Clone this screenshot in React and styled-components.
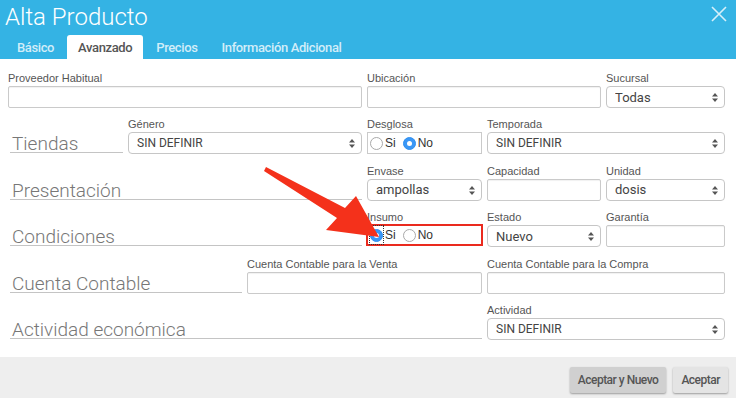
import React from "react";
import styled, { createGlobalStyle } from "styled-components";

const GlobalStyle = createGlobalStyle`
  html, body { margin: 0; padding: 0; background: #fff; }
  body { width: 736px; height: 398px; overflow: hidden; }
  * { box-sizing: border-box; }
`;

const Modal = styled.div`
  position: relative;
  width: 736px;
  height: 398px;
  display: flex;
  flex-direction: column;
  font-family: "Liberation Sans", Arial, sans-serif;
  background: #fff;
`;

const Header = styled.div`
  height: 59px;
  background: #34b3e4;
  display: flex;
  flex-direction: column;
  justify-content: space-between;
`;

const TitleRow = styled.div`
  display: flex;
  justify-content: space-between;
  align-items: flex-start;
  padding: 2px 9px 0 5px;
`;

const Title = styled.h1`
  margin: 0;
  font-family: Roboto, sans-serif;
  font-weight: 300;
  font-size: 24px;
  line-height: 30px;
  color: #fff;
`;

const Close = styled.button`
  margin-top: 4px;
  padding: 0;
  border: 0;
  background: none;
  width: 16px;
  height: 16px;
  display: flex;
`;

const Tabs = styled.div`
  display: flex;
  gap: 2px;
  padding-left: 6px;
  height: 24px;
`;

const Tab = styled.div`
  height: 24px;
  padding: 1px 11px 0;
  line-height: 23px;
  font-family: Roboto, sans-serif;
  font-weight: 500;
  font-size: 13px;
  letter-spacing: -0.38px;
  border-radius: 3px 3px 0 0;
  color: ${(p) => (p.$active ? "#555" : "rgba(255,255,255,0.78)")};
  background: ${(p) => (p.$active ? "#fff" : "transparent")};
`;

const Body = styled.div`
  flex: 1;
  padding: 11px 11px 0 8px;
`;

const FormGrid = styled.div`
  display: grid;
  grid-template-columns: 115fr 114fr 115fr 115fr 114fr 119fr;
  grid-auto-rows: 38px;
  column-gap: 5px;
  row-gap: 8.4px;
`;

const FieldCell = styled.div`
  grid-column: span ${(p) => p.$span || 1};
  display: flex;
  flex-direction: column;
  min-width: 0;
`;

const Label = styled.label`
  height: 16px;
  line-height: 16px;
  font-size: 11px;
  color: #555;
  white-space: nowrap;
`;

const Section = styled.div`
  grid-column: span ${(p) => p.$span || 1};
  align-self: end;
  margin: 0 0 1px 2px;
  padding-left: 2px;
  border-bottom: 1px solid #c4c4c4;
  font-family: Roboto, sans-serif;
  font-weight: 300;
  font-size: 19px;
  line-height: 16px;
  color: #777;
  white-space: nowrap;
`;

const TextInput = styled.input`
  height: 22px;
  width: 100%;
  border: 1px solid #cacaca;
  border-radius: 2px;
  box-shadow: inset 0 1px 1px rgba(0, 0, 0, 0.06);
  background: #fff;
  outline: none;
`;

const SelectWrap = styled.div`
  position: relative;
  height: 22px;
`;

const SelectBox = styled.select`
  appearance: none;
  width: 100%;
  height: 22px;
  border: 1px solid #c6c6c6;
  border-radius: 4px;
  background: #fff;
  padding: 0 20px 0 8px;
  font-family: Roboto, sans-serif;
  font-size: ${(p) => (p.$caps ? "12px" : "13px")};
  color: #444;
  outline: none;
`;

const SelectArrows = styled.svg`
  position: absolute;
  right: 7px;
  top: 7px;
  pointer-events: none;
`;

const RadioBox = styled.div`
  height: 22px;
  display: flex;
  align-items: center;
  padding-left: 1px;
  border: ${(p) => (p.$highlight ? "2px solid #ea2a1e" : "1px solid #cacaca")};
  margin: ${(p) => (p.$highlight ? "-1px" : "0")};
`;

const RadioHit = styled.span`
  display: flex;
  align-items: center;
  height: ${(p) => (p.$focus ? "20px" : "auto")};
  padding: 0 1px;
  outline: ${(p) => (p.$focus ? "1px dotted #333" : "none")};
  outline-offset: -1px;
`;

const RadioDot = styled.span`
  width: 13px;
  height: 13px;
  border-radius: 50%;
  display: flex;
  align-items: center;
  justify-content: center;
  border: 1px solid ${(p) => (p.$checked ? "#2f8ff0" : "#a9a9a9")};
  background: ${(p) => (p.$checked ? "#3a97f6" : "#fff")};
  &::after {
    content: "";
    width: 5px;
    height: 5px;
    border-radius: 50%;
    background: #fff;
    display: ${(p) => (p.$checked ? "block" : "none")};
  }
`;

const RadioText = styled.span`
  font-size: 12px;
  color: #333;
  margin: 0 6px 0 1px;
`;

const Footer = styled.div`
  height: 41px;
  background: #eeeeee;
  display: flex;
  justify-content: flex-end;
  align-items: flex-start;
  gap: 7px;
  padding: 10px 8px 0 0;
`;

const Button = styled.button`
  height: 26px;
  padding: 0 8px;
  border: 0;
  border-radius: 2px;
  background: ${(p) => (p.$dark ? "#d0d0d0" : "#e4e4e4")};
  box-shadow: 0 1px 2px rgba(0, 0, 0, 0.35);
  font-family: Roboto, sans-serif;
  font-weight: 500;
  font-size: 12px;
  letter-spacing: -0.5px;
  color: #555;
`;

const Overlay = styled.svg`
  position: absolute;
  left: 0;
  top: 0;
  pointer-events: none;
`;

const Arrows = () => (
  <SelectArrows width="6" height="9" viewBox="0 0 6 9">
    <path d="M3 0 L6 3.5 L0 3.5 Z M0 5.5 L6 5.5 L3 9 Z" fill="#555" />
  </SelectArrows>
);

const Select = ({ value, caps }) => (
  <SelectWrap>
    <SelectBox $caps={caps} defaultValue={value}>
      <option value={value}>{value}</option>
    </SelectBox>
    <Arrows />
  </SelectWrap>
);

const Field = ({ label, span, children }) => (
  <FieldCell $span={span}>
    <Label>{label}</Label>
    {children}
  </FieldCell>
);

const Radios = ({ value, highlight, focus }) => (
  <RadioBox $highlight={highlight}>
    {["Si", "No"].map((opt, i) => (
      <React.Fragment key={opt}>
        <RadioHit $focus={focus && i === 0}>
          <RadioDot $checked={value === opt} />
        </RadioHit>
        <RadioText>{opt}</RadioText>
      </React.Fragment>
    ))}
  </RadioBox>
);

const tabs = ["Básico", "Avanzado", "Precios", "Información Adicional"];

export default function App() {
  return (
    <Modal>
      <GlobalStyle />
      <Header>
        <TitleRow>
          <Title>Alta Producto</Title>
          <Close aria-label="Cerrar">
            <svg width="16" height="16" viewBox="0 0 16 16">
              <path d="M1 1 L15 15 M15 1 L1 15" stroke="rgba(255,255,255,0.8)" strokeWidth="1.6" />
            </svg>
          </Close>
        </TitleRow>
        <Tabs>
          {tabs.map((t) => (
            <Tab key={t} $active={t === "Avanzado"}>{t}</Tab>
          ))}
        </Tabs>
      </Header>

      <Body>
        <FormGrid>
          <Field label="Proveedor Habitual" span={3}><TextInput /></Field>
          <Field label="Ubicación" span={2}><TextInput /></Field>
          <Field label="Sucursal"><Select value="Todas" /></Field>

          <Section>Tiendas</Section>
          <Field label="Género" span={2}><Select value="SIN DEFINIR" caps /></Field>
          <Field label="Desglosa"><Radios value="No" /></Field>
          <Field label="Temporada" span={2}><Select value="SIN DEFINIR" caps /></Field>

          <Section $span={3}>Presentación</Section>
          <Field label="Envase"><Select value="ampollas" /></Field>
          <Field label="Capacidad"><TextInput /></Field>
          <Field label="Unidad"><Select value="dosis" /></Field>

          <Section $span={3}>Condiciones</Section>
          <Field label="Insumo"><Radios value="Si" highlight focus /></Field>
          <Field label="Estado"><Select value="Nuevo" /></Field>
          <Field label="Garantía"><TextInput /></Field>

          <Section $span={2}>Cuenta Contable</Section>
          <Field label="Cuenta Contable para la Venta" span={2}><TextInput /></Field>
          <Field label="Cuenta Contable para la Compra" span={2}><TextInput /></Field>

          <Section $span={4}>Actividad económica</Section>
          <Field label="Actividad" span={2}><Select value="SIN DEFINIR" caps /></Field>
        </FormGrid>
      </Body>

      <Footer>
        <Button $dark>Aceptar y Nuevo</Button>
        <Button>Aceptar</Button>
      </Footer>

      <Overlay width="736" height="398" viewBox="0 0 736 398">
        <path
          d="M266 167 L345 208 L356 196 L379 237 L326 230 L337 218 L264 171 Z"
          fill="#f4311b"
        />
      </Overlay>
    </Modal>
  );
}
